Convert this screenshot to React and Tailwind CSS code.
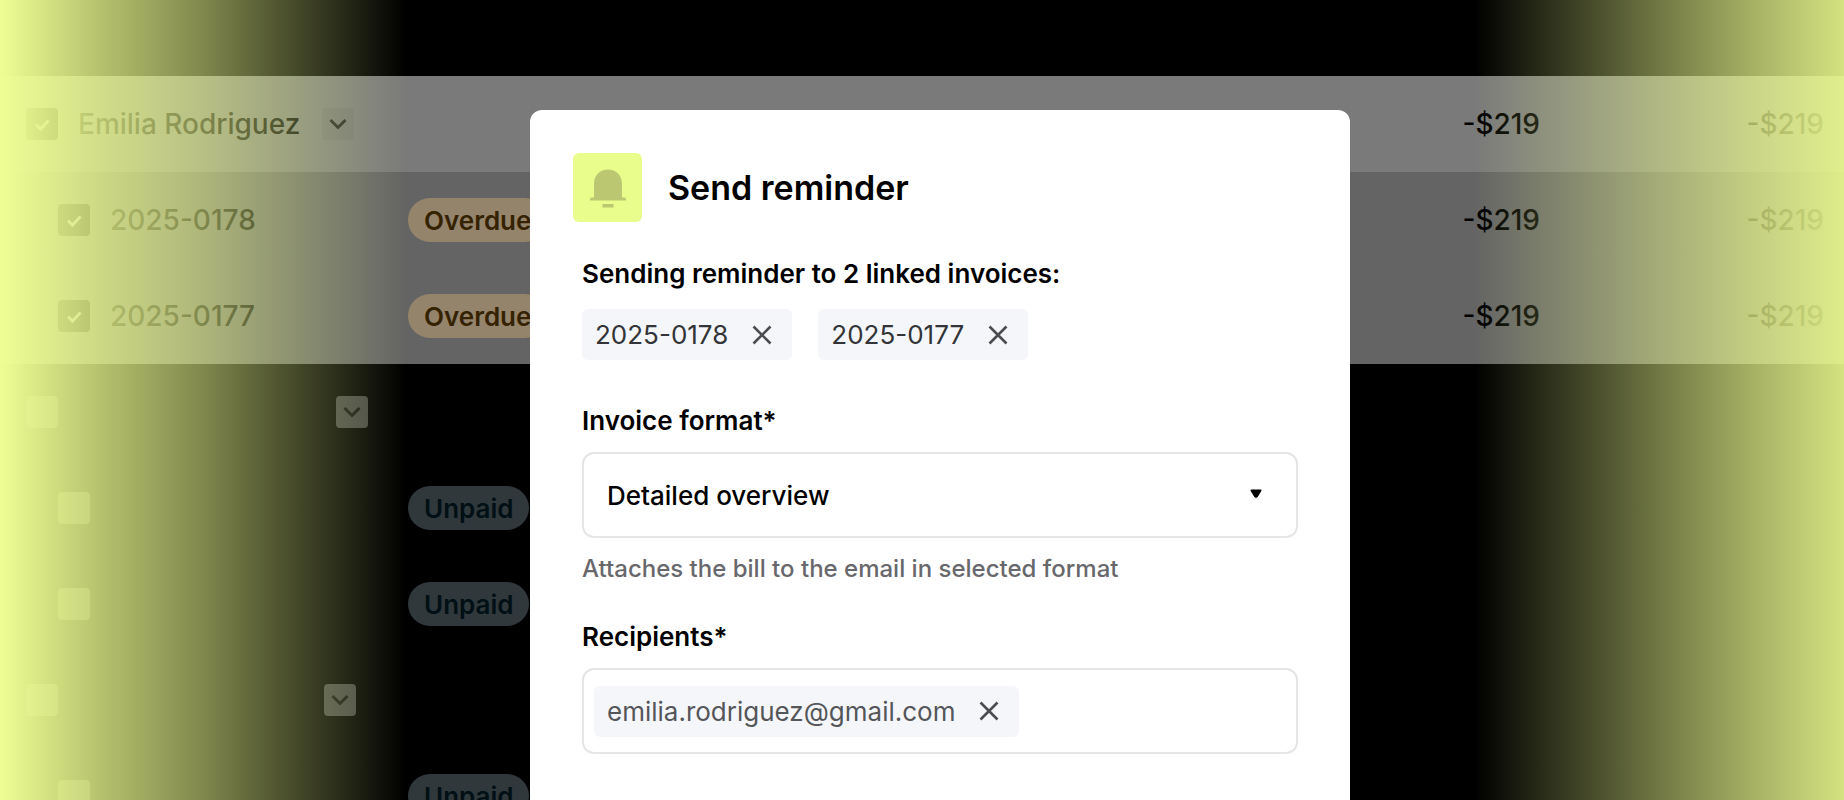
import { useState } from 'react';

const initialRows = [
  { id: 1, type: 'customer', name: 'Emilia Rodriguez', checked: true, amount: '-$219' },
  { id: 2, type: 'invoice', name: '2025-0178', status: 'Overdue', checked: true, amount: '-$219' },
  { id: 3, type: 'invoice', name: '2025-0177', status: 'Overdue', checked: true, amount: '-$219' },
  { id: 4, type: 'customer', nameWidth: 'w-[236px]', checked: false },
  { id: 5, type: 'invoice', status: 'Unpaid', checked: false },
  { id: 6, type: 'invoice', status: 'Unpaid', checked: false },
  { id: 7, type: 'customer', nameWidth: 'w-[224px]', checked: false },
  { id: 8, type: 'invoice', status: 'Unpaid', checked: false },
];

const ChevronIcon = () => (
  <svg viewBox="0 0 32 32" fill="none" stroke="currentColor" strokeWidth="3" className="size-8" aria-hidden="true">
    <path d="M8.5 12 16 19.500l7.500-7.500" />
  </svg>
);

const CloseIcon = () => (
  <svg viewBox="0 0 20 20" fill="none" stroke="currentColor" strokeWidth="2.6" className="size-5" aria-hidden="true">
    <path d="m1.500 1.500 17 17M18.500 1.500l-17 17" />
  </svg>
);

const BellIcon = () => (
  <svg viewBox="0 0 36 40" fill="#bcc771" className="h-10 w-9" aria-hidden="true">
    <path d="M4 29.500V15.500C4 7.500 10 1.500 18 1.500S32 7.500 32 15.500V29.500h2.500a1.500 1.500 0 0 1 1.500 1.500V32.500H0v-1.500A1.500 1.500 0 0 1 1.500 29.500Z" />
    <path d="M12.500 36h11v3.500h-11z" />
  </svg>
);

const Checkbox = ({ checked, label, onChange }) => (
  <span className="grid shrink-0">
    <input
      type="checkbox"
      checked={checked}
      onChange={onChange}
      aria-label={label}
      className="col-start-1 row-start-1 size-8 appearance-none rounded-sm bg-[#444] checked:bg-black"
    />
    {checked && (
      <svg
        viewBox="0 0 32 32"
        fill="none"
        stroke="#a0a0a0"
        strokeWidth="3"
        className="pointer-events-none col-start-1 row-start-1 size-8"
        aria-hidden="true"
      >
        <path d="m10 16.500 4.500 4.500 8-8.500" />
      </svg>
    )}
  </span>
);

const Chip = ({ children, className, onRemove }) => (
  <span className={`flex h-[51px] items-center gap-6 rounded-md bg-[#f4f6f9] px-[13px] pr-5 text-[26px] ${className}`}>
    {children}
    <button type="button" onClick={onRemove} aria-label={`Remove ${children}`} className="text-[#4b4c50]">
      <CloseIcon />
    </button>
  </span>
);

const InvoiceRow = ({ row, onToggle }) => {
  const isCustomer = row.type === 'customer';
  let background = '';
  if (row.checked) {
    background = isCustomer ? 'bg-[#7a7a7a]' : 'bg-[#646464]';
  }

  return (
    <tr className={`h-24 ${background}`}>
      <td className={isCustomer ? 'pl-[26px]' : 'pl-[58px]'}>
        <div className="flex items-center">
          <Checkbox
            checked={row.checked}
            onChange={() => onToggle(row.id)}
            label={isCustomer ? 'Select customer' : 'Select invoice'}
          />
          <span className={`ml-5 whitespace-nowrap ${row.nameWidth || ''}`}>{row.name}</span>
          {isCustomer && (
            <button
              type="button"
              aria-label="Toggle invoices"
              className={`ml-[22px] rounded-sm ${row.checked ? 'bg-[#747474] text-[#222]' : 'bg-[#444] text-[#111]'}`}
            >
              <ChevronIcon />
            </button>
          )}
        </div>
      </td>
      <td>
        {row.status && (
          <div className="flex">
            <span
              className={`flex h-11 items-center rounded-full px-4 text-[26px] font-semibold ${
                row.status === 'Overdue' ? 'bg-[#94846b] text-[#352200]' : 'bg-[#30383c] text-[#001014]'
              }`}
            >
              {row.status}
            </span>
          </div>
        )}
      </td>
      <td className="pr-5 text-right">{row.amount}</td>
      <td className="pr-5 text-right">{row.amount}</td>
    </tr>
  );
};

const App = () => {
  const [rows, setRows] = useState(initialRows);
  const [invoices, setInvoices] = useState(['2025-0178', '2025-0177']);
  const [recipients, setRecipients] = useState(['emilia.rodriguez@gmail.com']);
  const [format, setFormat] = useState('Detailed overview');

  const handleToggle = (id) => {
    setRows(rows.map((row) => (row.id === id ? { ...row, checked: !row.checked } : row)));
  };

  return (
    <main className="relative h-screen overflow-hidden bg-black font-['Inter',sans-serif] text-black">
      {/* Invoice list */}
      <table className="w-full table-fixed border-collapse text-[28px] font-medium">
        <colgroup>
          <col className="w-[408px]" />
          <col />
          <col className="w-[284px]" />
          <col className="w-[284px]" />
        </colgroup>
        <thead>
          <tr className="h-[76px]">
            <th />
            <th />
            <th />
            <th />
          </tr>
        </thead>
        <tbody>
          {rows.map((row) => (
            <InvoiceRow key={row.id} row={row} onToggle={handleToggle} />
          ))}
        </tbody>
      </table>

      {/* Edge fades */}
      <div className="pointer-events-none absolute inset-y-0 left-0 w-[22%] bg-[linear-gradient(to_right,#effe94,rgba(236,251,142,0.77)_25%,rgba(236,251,142,0.54)_50%,rgba(236,251,142,0))]" />
      <div className="pointer-events-none absolute inset-y-0 right-0 w-[20%] bg-[linear-gradient(to_left,rgba(236,251,142,0.9),rgba(236,251,142,0.7)_25%,rgba(236,251,142,0.48)_50%,rgba(236,251,142,0))]" />

      {/* Send reminder dialog */}
      <div className="absolute inset-0 flex justify-center pt-[110px] pl-9">
        <section
          role="dialog"
          aria-labelledby="dialog-title"
          className="h-fit w-full max-w-[820px] rounded-t-xl bg-white px-[43px] pt-[43px] pb-16"
        >
          <header className="flex items-center gap-[26px]">
            <div className="flex size-[69px] items-center justify-center rounded-md bg-[#e9fd8d]">
              <BellIcon />
            </div>
            <h1 id="dialog-title" className="text-[34px] leading-12 font-semibold">
              Send reminder
            </h1>
          </header>

          <form className="px-[9px]" onSubmit={(e) => e.preventDefault()}>
            <p className="mt-9 text-[26px] leading-8 font-semibold">
              Sending reminder to {invoices.length} linked invoices:
            </p>
            <div className="mt-[19px] flex gap-[26px]">
              {invoices.map((invoice) => (
                <Chip
                  key={invoice}
                  className="text-[#333438]"
                  onRemove={() => setInvoices(invoices.filter((i) => i !== invoice))}
                >
                  {invoice}
                </Chip>
              ))}
            </div>

            <label htmlFor="format" className="mt-[45px] block text-[26px] leading-8 font-semibold">
              Invoice format*
            </label>
            <div className="relative mt-[15px]">
              <select
                id="format"
                value={format}
                onChange={(e) => setFormat(e.target.value)}
                className="h-[86px] w-full appearance-none rounded-xl border-2 border-[#e5e5e5] bg-white px-[23px] text-[26px] font-medium"
              >
                <option>Detailed overview</option>
              </select>
              <svg
                viewBox="0 0 12 10"
                className="pointer-events-none absolute top-[37px] right-9 h-[10px] w-3"
                aria-hidden="true"
              >
                <path
                  d="M1.500 1.500h9L7 7.200a1.200 1.200 0 0 1-2 0Z"
                  stroke="currentColor"
                  strokeWidth="2"
                  strokeLinejoin="round"
                />
              </svg>
            </div>
            <p className="mt-[15px] text-[24px] leading-8 font-medium text-[#68686c]">
              Attaches the bill to the email in selected format
            </p>

            <label htmlFor="recipients" className="mt-9 block text-[26px] leading-8 font-semibold">
              Recipients*
            </label>
            <div className="mt-[15px] flex h-[86px] items-center rounded-xl border-2 border-[#e5e5e5] px-[10px]">
              {recipients.map((recipient) => (
                <Chip
                  key={recipient}
                  className="text-[#55565a]"
                  onRemove={() => setRecipients(recipients.filter((r) => r !== recipient))}
                >
                  {recipient}
                </Chip>
              ))}
              <input id="recipients" type="email" className="min-w-0 flex-1 px-3 text-[26px] outline-none" />
            </div>
          </form>
        </section>
      </div>
    </main>
  );
};

export default App;
